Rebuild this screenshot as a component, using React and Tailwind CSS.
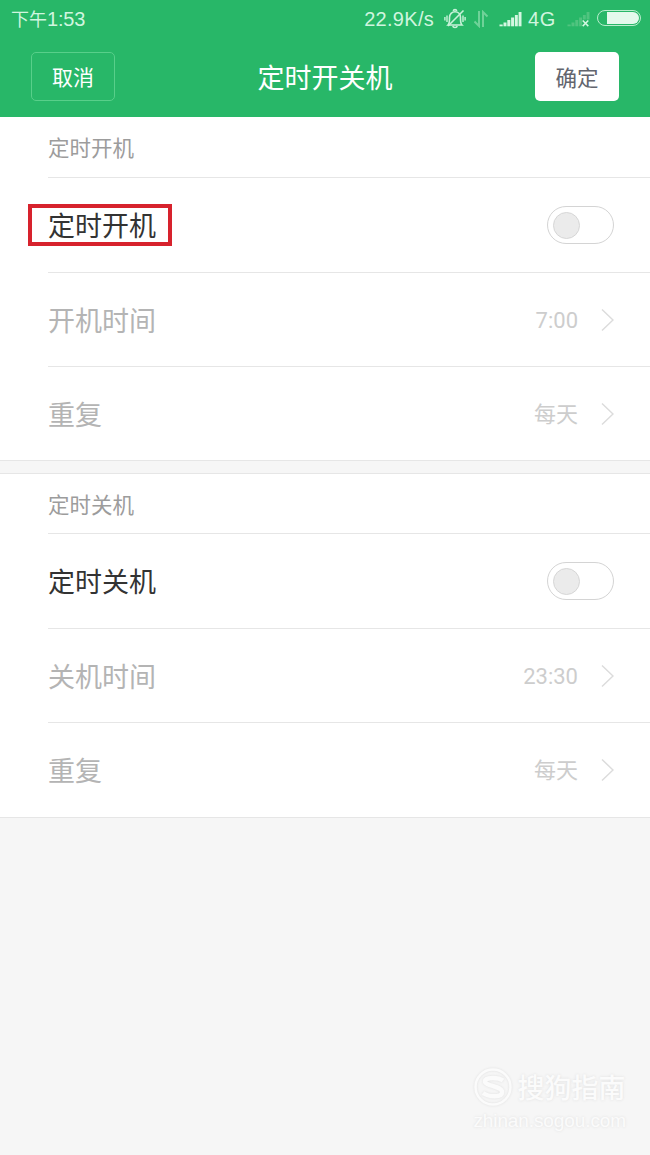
import React, { useState } from "react";

function MuteIcon() {
  return (
    <svg width="22" height="22" viewBox="0 0 22 22" fill="none" stroke="#c8f2d9" strokeWidth="1.600" className="ml-[10px]">
      <path d="M4 17c1.700-1.700 1.500-4 1.500-7.500C5.500 6 8 3.800 11 3.800s5.500 2.200 5.500 5.700c0 3.500-.2 5.800 1.500 7.500z" />
      <path d="M8.800 18c.4 2 4 2 4.400 0M9.300 3c.3-1.800 3.100-1.800 3.400 0" />
      <path d="M4 18L19.500 2.500" />
      <path d="M3 7.500v6.500M.9 9v3.500M19 7.500v6.500M21.100 9v3.500" strokeWidth="1.400" />
    </svg>
  );
}

function DataIcon() {
  return (
    <svg width="16" height="18" viewBox="0 0 16 18" fill="none" stroke="#6fd298" strokeWidth="2" className="ml-[8px]">
      <path d="M5 1v15L.5 11.500M9 17V2L13.500 6.500" />
    </svg>
  );
}

function SignalIcon({ off }) {
  return (
    <svg width="24" height="18" viewBox="0 0 24 18" className={off ? "ml-[11px]" : "ml-[9px]"}>
      <g fill={off ? "#50c47f" : "#d5f7e2"}>
        <rect x="0.500" y="14.500" width="3.200" height="1.800" />
        <rect x="4.500" y="12.500" width="3" height="3.800" />
        <rect x="8.300" y="10" width="3" height="6.300" />
        <rect x="12.100" y="7.500" width="3" height="8.800" />
        <rect x="15.900" y="5" width="2.900" height={off ? 4.5 : 11.3} />
        <rect x="19.600" y="2" width="2.900" height={off ? 7.5 : 14.3} />
      </g>
      {off && <path d="M15.700 10.500l5.600 5.600M21.300 10.500l-5.600 5.600" stroke="#d5f7e2" strokeWidth="1.500" />}
    </svg>
  );
}

function StatusBar() {
  return (
    <div className="h-[37px] flex items-center justify-between pl-[11px] pr-[9px] text-[#d0f5df]">
      <span className="text-[18px]">
        下午<span className="text-[20px] font-['Liberation_Sans'] tracking-[-0.2px]">1:53</span>
      </span>
      <div className="flex items-center">
        <span className="text-[20px] font-['Liberation_Sans'] tracking-[0.3px]">22.9K/s</span>
        <MuteIcon />
        <DataIcon />
        <SignalIcon />
        <span className="ml-[5px] text-[20px] font-['Liberation_Sans'] tracking-[0.6px]">4G</span>
        <SignalIcon off />
        <div className="ml-[6px] w-[44px] h-[16px] mb-px rounded-full border-[1.5px] border-[#b9edcd] p-px flex justify-end">
          <div className="w-[32px] h-full rounded-r-full bg-[#e4f9ec]" />
        </div>
      </div>
    </div>
  );
}

function Chevron() {
  return (
    <svg width="13" height="24" viewBox="0 0 13 24" fill="none" stroke="#dcdcdc" strokeWidth="1.500" className="ml-[23px]">
      <path d="M1 1.500L12 12L1 22.500" />
    </svg>
  );
}

function Switch({ checked, onChange }) {
  return (
    <button
      type="button"
      role="switch"
      aria-checked={checked}
      onClick={() => onChange(!checked)}
      className={`w-[67px] h-[38px] rounded-full border border-[#d4d4d4] px-[5px] flex items-center ${checked ? "justify-end bg-[#28b768]" : "bg-white"}`}
    >
      <span className="w-[27px] h-[27px] rounded-full bg-[#ebebeb] border border-[#d6d6d6]" />
    </button>
  );
}

function Row({ label, value, className }) {
  return (
    <div className={`ml-[48px] pr-[36px] flex items-center justify-between ${className}`}>
      <span className="pt-[2px] text-[27px] text-[#b4b4b4]">{label}</span>
      <div className="flex items-center">
        <span className="pt-[2px] text-[22px] text-[#cdcdcd] font-['Roboto','Noto_Sans_CJK_SC',sans-serif]">{value}</span>
        <Chevron />
      </div>
    </div>
  );
}

export default function App() {
  const [powerOn, setPowerOn] = useState(false);
  const [powerOff, setPowerOff] = useState(false);

  return (
    <div className="w-full h-[1155px] bg-[#f6f6f6] flex flex-col leading-none font-['Noto_Sans','Noto_Sans_CJK_SC',sans-serif]">
      {/* Header */}
      <header className="h-[117px] bg-[#28b768]">
        <StatusBar />
        <div className="flex items-center justify-between px-[31px] pt-[15px]">
          <button type="button" className="w-[84px] h-[49px] pt-[2px] rounded-[5px] border border-[#58cf8a] text-[21px] text-white">
            取消
          </button>
          <h1 className="pt-[2px] text-[27px] text-white">定时开关机</h1>
          <button type="button" className="w-[84px] h-[49px] pt-[2px] rounded-[5px] bg-white text-[21.500px] text-[#62656e]">
            确定
          </button>
        </div>
      </header>

      {/* Power on */}
      <section className="bg-white border-b border-[#e6e6e6]">
        <h2 className="ml-[48px] h-[61px] pt-[2px] border-b border-[#e6e6e6] flex items-center text-[21.500px] text-[#9c9c9c]">定时开机</h2>
        <div className="ml-[28px] pr-[36px] h-[94px] flex items-center justify-between">
          <span className="w-[144px] h-[42px] border-4 border-[#d7222d] pl-[16px] pt-px flex items-center text-[27px] text-[#333333] whitespace-nowrap">
            定时开机
          </span>
          <Switch checked={powerOn} onChange={setPowerOn} />
        </div>
        <Row label="开机时间" value="7:00" className="h-[95px] border-y border-[#e6e6e6]" />
        <Row label="重复" value="每天" className="h-[93px]" />
      </section>

      {/* Power off */}
      <section className="mt-[12px] bg-white border-y border-[#e6e6e6]">
        <h2 className="ml-[48px] h-[60px] pt-[2px] border-b border-[#e6e6e6] flex items-center text-[21.500px] text-[#9c9c9c]">定时关机</h2>
        <div className="ml-[48px] pr-[36px] h-[94px] flex items-center justify-between">
          <span className="pt-px text-[27px] text-[#333333]">定时关机</span>
          <Switch checked={powerOff} onChange={setPowerOff} />
        </div>
        <Row label="关机时间" value="23:30" className="h-[95px] border-y border-[#e6e6e6]" />
        <Row label="重复" value="每天" className="h-[94px] pb-px" />
      </section>

      {/* Watermark */}
      <footer className="mt-auto self-end pr-[24px] pb-[25px] text-[#fbfbfb] [text-shadow:0_0_3px_#dedede]">
        <div className="flex items-center">
          <svg width="40" height="40" viewBox="0 0 40 40" fill="none" className="drop-shadow-[0_0_1px_#dedede]">
            <circle cx="20" cy="20" r="17.500" stroke="#fbfbfb" strokeWidth="2.500" />
            <path d="M30 13.500c-5-3.500-18-3.500-18 1S29 19 29 25s-13 5-19 1" stroke="#fbfbfb" strokeWidth="4.500" />
          </svg>
          <span className="ml-[4px] text-[27px] font-medium">搜狗指南</span>
        </div>
        <div className="mt-[4px] text-[19px] font-['Liberation_Sans'] tracking-[-0.1px]">zhinan.sogou.com</div>
      </footer>
    </div>
  );
}
